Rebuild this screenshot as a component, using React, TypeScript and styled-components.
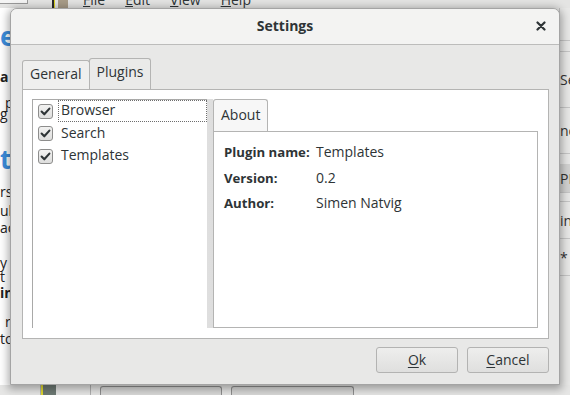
import React from 'react'
import styled, { createGlobalStyle } from 'styled-components'

const GlobalStyle = createGlobalStyle`
  html, body { margin: 0; padding: 0; }
  body {
    width: 570px;
    height: 395px;
    overflow: hidden;
    font-family: "Open Sans", "Noto Sans", sans-serif;
    color: #2e3436;
  }
`

const CheckMark: React.FC = () => (
  <svg width="15" height="15" viewBox="0 0 15 15">
    <path d="M3.6 7.6 L6.3 10.3 L11.4 4.6" fill="none" stroke="#2e3436" strokeWidth="2.1" strokeLinecap="round" strokeLinejoin="round" />
  </svg>
)

const CloseIcon: React.FC = () => (
  <svg width="10" height="10" viewBox="0 0 10 10">
    <path d="M1.5 1.5 L8.5 8.5 M8.5 1.5 L1.5 8.5" stroke="#2e3436" strokeWidth="2.2" strokeLinecap="round" />
  </svg>
)

const plugins = ['Browser', 'Search', 'Templates']

const App: React.FC = () => {
  return (
    <Desktop>
      <GlobalStyle />
      <BackWindow>
        <TopStrip>
          <CornerBox />
          <Grip />
          <GripTan />
          <Menu>
            {['File', 'Edit', 'View', 'Help'].map(m => (
              <MenuItem key={m}><u>{m[0]}</u>{m.slice(1)}</MenuItem>
            ))}
          </Menu>
        </TopStrip>
        <BackBody>
          <LeftPane>
            <Frag $mt={15} $big>e</Frag>
            <Frag $mt={19} $bold>a</Frag>
            <Frag $mt={12} $lh={11} $indent={5}>p</Frag>
            <Frag $mt={0} $lh={11}>g</Frag>
            <Frag $mt={27} $big>t</Frag>
            <Frag $mt={11}>rs</Frag>
            <Frag $mt={2}>ub</Frag>
            <Frag $mt={0}>ac</Frag>
            <Frag $mt={20} $lh={14}>y</Frag>
            <Frag $mt={0} $lh={14}>t</Frag>
            <Frag $mt={0} $bold>in</Frag>
            <Frag $mt={12} $indent={5}>r</Frag>
            <Frag $mt={0}>to</Frag>
          </LeftPane>
          <BackMiddle />
          <RightStrip>
            <StripCell $h={32} />
            <StripCell $h={10} $line />
            <StripCell $h={55} $line>Se</StripCell>
            <StripCell $h={45} $line>nc</StripCell>
            <StripCell $h={10} $line />
            <StripCell $h={28} $dark>PL</StripCell>
            <StripCell $h={8} $line />
            <StripCell $h={36} $line>in</StripCell>
            <StripCell $h={36} $line>*</StripCell>
            <StripCell $h={120} $line />
          </RightStrip>
        </BackBody>
        <BottomStrip>
          <BottomLine $w={40} />
          <BottomGrip />
          <BottomLine $w={34} />
          <BackButton $w={120} />
          <BackButton $w={121} />
        </BottomStrip>
      </BackWindow>

      <Dialog>
        <TitleBar>
          <Title>Settings</Title>
          <CloseButton><CloseIcon /></CloseButton>
        </TitleBar>
        <DialogBody>
          <TabRow>
            <Tab>General</Tab>
            <Tab $active>Plugins</Tab>
          </TabRow>
          <TabPage>
            <PluginList>
              {plugins.map((p, i) => (
                <PluginRow key={p}>
                  <CheckBox><CheckMark /></CheckBox>
                  <PluginName $focused={i === 0}>{p}</PluginName>
                </PluginRow>
              ))}
            </PluginList>
            <SplitHandle />
            <InfoSide>
              <InnerTabRow>
                <InnerTab>About</InnerTab>
              </InnerTabRow>
              <InfoPage>
                <InfoGrid>
                  <InfoLabel>Plugin name:</InfoLabel>
                  <InfoValue>Templates</InfoValue>
                  <InfoLabel>Version:</InfoLabel>
                  <InfoValue>0.2</InfoValue>
                  <InfoLabel>Author:</InfoLabel>
                  <InfoValue>Simen Natvig</InfoValue>
                </InfoGrid>
              </InfoPage>
            </InfoSide>
          </TabPage>
          <ButtonRow>
            <Button><u>O</u>k</Button>
            <Button><u>C</u>ancel</Button>
          </ButtonRow>
        </DialogBody>
      </Dialog>
    </Desktop>
  )
}

const Desktop = styled.div`
  position: relative;
  width: 570px;
  height: 395px;
  overflow: hidden;
  background: #e8e8e7;
  display: flex;
`

const BackWindow = styled.div`
  flex: 1;
  display: flex;
  flex-direction: column;
`

const TopStrip = styled.div`
  height: 8px;
  flex: none;
  display: flex;
  overflow: hidden;
  background: #e4e4e3;
`

const CornerBox = styled.div`
  width: 27px;
  height: 3px;
  border-right: 1px solid #9a9a9a;
  border-bottom: 1px solid #9a9a9a;
  background: #f4f4f4;
  margin-right: 24px;
`

const Grip = styled.div`
  width: 2px;
  background: #2a2a2a;
  border-right: 1px solid #d8d020;
  margin-right: 3px;
`

const GripTan = styled.div`
  width: 10px;
  background: #a89c88;
`

const Menu = styled.div`
  display: flex;
  padding-left: 15px;
`

const MenuItem = styled.span`
  font-size: 14px;
  line-height: 16px;
  margin-top: -8px;
  margin-right: 20px;
  color: #2e3436;
  u { text-underline-offset: 1px; }
`

const BackBody = styled.div`
  flex: 1;
  display: flex;
  min-height: 0;
`

const LeftPane = styled.div`
  width: 30px;
  background: #ffffff;
  display: flex;
  flex-direction: column;
  overflow: hidden;
`

const Frag = styled.div<{ $mt: number; $big?: boolean; $bold?: boolean; $indent?: number; $lh?: number }>`
  margin-top: ${p => p.$mt}px;
  padding-left: ${p => p.$indent ?? 0}px;
  font-size: ${p => (p.$big ? 26 : 14)}px;
  line-height: ${p => p.$lh ?? (p.$big ? 26 : 17)}px;
  font-weight: ${p => (p.$big || p.$bold ? 700 : 400)};
  color: ${p => (p.$big ? '#3d8ddc' : '#222222')};
  white-space: nowrap;
`

const BackMiddle = styled.div`
  flex: 1;
`

const RightStrip = styled.div`
  width: 10px;
  display: flex;
  flex-direction: column;
  border-left: 1px solid #c4c4c4;
  overflow: hidden;
`

const StripCell = styled.div<{ $h: number; $line?: boolean; $dark?: boolean }>`
  height: ${p => p.$h}px;
  flex: none;
  display: flex;
  align-items: center;
  font-size: 14px;
  white-space: nowrap;
  color: #333;
  background: ${p => (p.$dark ? '#d2d2d1' : 'transparent')};
  border-top: ${p => (p.$line ? '1px solid #c6c6c6' : 'none')};
`

const BottomStrip = styled.div`
  height: 10px;
  flex: none;
  display: flex;
  align-items: flex-end;
  background: #e6e6e5;
`

const BottomLine = styled.div<{ $w: number }>`
  width: ${p => p.$w}px;
  height: 100%;
  border-right: 1px solid #b0b0b0;
`

const BottomGrip = styled.div`
  width: 13px;
  height: 100%;
  background: #6e7a74;
  border-left: 2px solid #e0d830;
`

const BackButton = styled.div<{ $w: number }>`
  width: ${p => p.$w}px;
  height: 8px;
  margin-left: 9px;
  border: 1px solid #8e8e8e;
  border-bottom: none;
  border-radius: 3px 3px 0 0;
  background: #d8d8d7;
`

const Dialog = styled.div`
  position: absolute;
  left: 10px;
  top: 8px;
  width: 550px;
  height: 377px;
  box-sizing: border-box;
  display: flex;
  flex-direction: column;
  background: #e8e8e7;
  border: 1px solid #a4a4a4;
  border-radius: 7px 7px 0 0;
  box-shadow: 0 2px 9px 2px rgba(0, 0, 0, 0.33);
`

const TitleBar = styled.div`
  position: relative;
  height: 36px;
  flex: none;
  box-sizing: border-box;
  padding-bottom: 2px;
  display: flex;
  align-items: center;
  justify-content: center;
  background: #f3f3f2;
  border-bottom: 1px solid #bcbcbb;
  border-radius: 6px 6px 0 0;
`

const Title = styled.span`
  font-size: 14px;
  font-weight: 700;
  color: #2e3436;
`

const CloseButton = styled.div`
  position: absolute;
  right: 13px;
  top: 12px;
  width: 10px;
  height: 10px;
  display: flex;
`

const DialogBody = styled.div`
  flex: 1;
  display: flex;
  flex-direction: column;
  padding: 13px 10px 11px 11px;
  min-height: 0;
`

const TabRow = styled.div`
  display: flex;
  align-items: flex-end;
  height: 31px;
  flex: none;
`

const Tab = styled.div<{ $active?: boolean }>`
  height: ${p => (p.$active ? 31 : 29)}px;
  box-sizing: border-box;
  padding: 0 7px ${p => (p.$active ? 5 : 4)}px;
  margin-left: ${p => (p.$active ? -1 : 0)}px;
  display: flex;
  align-items: center;
  font-size: 14px;
  color: #2e3436;
  background: ${p => (p.$active ? '#eaeae9' : '#efefee')};
  border: 1px solid #b4b4b3;
  border-bottom: none;
  border-radius: 3px 3px 0 0;
  position: relative;
  z-index: ${p => (p.$active ? 1 : 0)};
`

const TabPage = styled.div`
  flex: 1;
  min-height: 0;
  display: flex;
  padding: 9px 10px 10px 9px;
  background: #ffffff;
  border: 1px solid #b4b4b3;
`

const PluginList = styled.div`
  width: 174px;
  display: flex;
  flex-direction: column;
  border-left: 1px solid #a9a9a8;
  border-top: 1px solid #a9a9a8;
`

const PluginRow = styled.div`
  height: 22.5px;
  display: flex;
  align-items: center;
  padding-left: 5px;
`

const CheckBox = styled.div`
  width: 15px;
  height: 15px;
  box-sizing: border-box;
  border: 1px solid #8d8d8c;
  border-radius: 3px;
  background: linear-gradient(#f2f2f1, #dededd);
  display: flex;
  align-items: center;
  justify-content: center;
  margin-right: 5px;
  svg { margin: -1px; }
`

const PluginName = styled.div<{ $focused?: boolean }>`
  flex: 1;
  height: 22px;
  box-sizing: border-box;
  display: flex;
  align-items: center;
  padding: 0 0 3px 2px;
  font-size: 14px;
  color: #2e3436;
  border: 1px dotted ${p => (p.$focused ? '#6e6e6e' : 'transparent')};
`

const SplitHandle = styled.div`
  width: 6px;
  flex: none;
  background-color: #fbfbfb;
  background-image: radial-gradient(#dcdcdc 0.7px, transparent 0.8px);
  background-size: 2px 2px;
`

const InfoSide = styled.div`
  flex: 1;
  display: flex;
  flex-direction: column;
`

const InnerTabRow = styled.div`
  display: flex;
  height: 32px;
  flex: none;
  align-items: flex-end;
`

const InnerTab = styled.div`
  height: 32px;
  box-sizing: border-box;
  padding: 0 7px 3px;
  display: flex;
  align-items: center;
  font-size: 14px;
  color: #2e3436;
  background: #f7f7f7;
  border: 1px solid #b4b4b3;
  border-bottom: none;
  border-radius: 3px 3px 0 0;
`

const InfoPage = styled.div`
  flex: 1;
  border: 1px solid #b4b4b3;
  padding: 10px 10px;
`

const InfoGrid = styled.div`
  display: grid;
  grid-template-columns: 92px 1fr;
  row-gap: 5.5px;
  font-size: 14px;
  line-height: 20px;
`

const InfoLabel = styled.div`
  font-weight: 700;
  font-size: 13.2px;
  color: #2e3436;
  white-space: nowrap;
`

const InfoValue = styled.div`
  color: #2e3436;
`

const ButtonRow = styled.div`
  flex: none;
  display: flex;
  justify-content: flex-end;
  gap: 9px;
  margin-top: 8px;
`

const Button = styled.div`
  width: 82px;
  height: 26px;
  box-sizing: border-box;
  padding-bottom: 2px;
  display: flex;
  align-items: center;
  justify-content: center;
  font-size: 14px;
  color: #2e3436;
  border: 1px solid #b3b3b2;
  border-radius: 3px;
  background: linear-gradient(#eeeeed, #dfdfde);
  u { text-underline-offset: 2px; }
`

export default App
